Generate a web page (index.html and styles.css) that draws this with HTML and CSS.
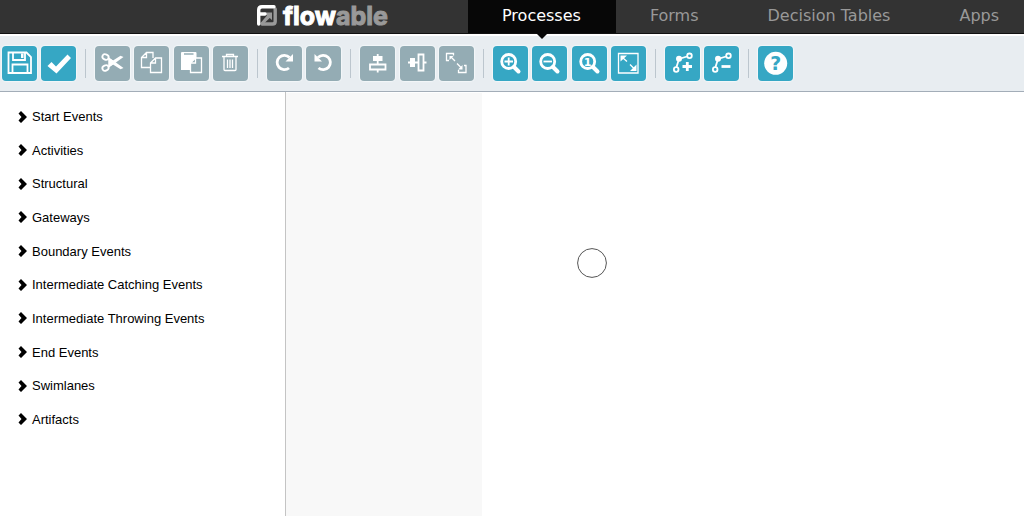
FILE: index.html
```html
<!DOCTYPE html>
<html lang="en">
<head>
<meta charset="utf-8">
<title>Flowable</title>
<link rel="stylesheet" href="styles.css">
</head>
<body>
<header class="header">
  <div class="brand">
    <a class="logo" href="#">
      <svg class="logo-mark" viewBox="0 0 20 21" aria-hidden="true">
        <path d="M18.200 4V16.500Q18.200 19 15.500 19H5" fill="none" stroke="#999" stroke-width="3.400" stroke-linecap="round" stroke-linejoin="round"/>
        <path d="M7.500 7.500H15V15L12.700 13L5.500 20L3.500 18L10 10.500Z" fill="#999"/>
        <path d="M1.700 19V5Q1.700 1.700 5 1.700H17M2 9H8" fill="none" stroke="#fff" stroke-width="3.400" stroke-linecap="round"/>
      </svg>
      <span class="logo-text">flow<span class="logo-dim">able</span></span>
    </a>
  </div>
  <nav class="nav">
    <a class="tab tab-active" href="#">Processes</a>
    <a class="tab" href="#">Forms</a>
    <a class="tab" href="#">Decision Tables</a>
    <a class="tab" href="#">Apps</a>
  </nav>
</header>

<div class="toolbar" role="toolbar" aria-label="Editor">
  <div class="group pair">
    <button class="tool" aria-label="Save"><svg viewBox="0 0 35 35"><path d="M6.500 6.500H24.500L29 11V27H6.500Z" class="line2"/><path d="M11 6.500V14H23V6.500M10.500 27V18.500H25.500V27" class="line2"/><path d="M19 7.500H21.500V12H19Z" class="solid"/></svg></button>
    <button class="tool" aria-label="Validate"><svg viewBox="0 0 35 35"><path d="M6.500 20L10.500 16L15 20.500L26.500 8.500L30 12L15.500 27.500Z" class="solid"/></svg></button>
  </div>
  <span class="rule"></span>
  <div class="group quad">
    <button class="tool" aria-label="Cut" disabled><svg viewBox="0 0 35 35"><ellipse cx="10.500" cy="11" rx="3.200" ry="2.600" transform="rotate(25 10.500 11)" class="line2"/><ellipse cx="10.500" cy="22" rx="3.200" ry="2.600" transform="rotate(-25 10.500 22)" class="line2"/><path d="M13 11.500L18 14.500L25.500 9.800L28.500 11L14 21.500Z" class="solid"/><path d="M13 21.500L18 18.500L25.500 23.200L28.500 22L14 11.500Z" class="solid"/></svg></button>
    <button class="tool" aria-label="Copy" disabled><svg viewBox="0 0 35 35"><path d="M16 21.500H7.500V11.500L12.500 6.500H19V12M12.500 6.500V11.500H7.500M16.500 17L21.500 12H27.500V26.500H16.500ZM21.500 12V17H16.500" class="line"/></svg></button>
    <button class="tool" aria-label="Paste" disabled><svg viewBox="0 0 35 35"><path d="M7 7Q7 6 8 6H21.500Q22.500 6 22.500 7V24H7Z" class="solid"/><path d="M10 8H19.500" class="gap"/><path d="M16.500 17L21.500 12H27.500V26.500H16.500Z" class="sheet"/><path d="M21.500 12V17H16.500" class="line"/></svg></button>
    <button class="tool" aria-label="Delete" disabled><svg viewBox="0 0 35 35"><path d="M9 10.500H25M13.500 10V8.500H20.500V10M11 11V23.500Q11 24.500 12 24.500H22Q23 24.500 23 23.500V11M14.500 13.500V22M17 13.500V22M19.500 13.500V22" class="line"/></svg></button>
  </div>
  <span class="rule"></span>
  <div class="group pair">
    <button class="tool" aria-label="Redo" disabled><svg viewBox="0 0 35 35"><path d="M22 22A7.200 7.200 0 1 1 22.500 11.500" class="line3"/><path d="M26 8V15.500H18.500Z" class="solid"/></svg></button>
    <button class="tool" aria-label="Undo" disabled><svg viewBox="0 0 35 35"><path d="M12.500 22A7.200 7.200 0 1 0 12 11.500" class="line3"/><path d="M8.500 8V15.500H16Z" class="solid"/></svg></button>
  </div>
  <span class="rule"></span>
  <div class="group trio">
    <button class="tool" aria-label="Align vertical" disabled><svg viewBox="0 0 35 35"><path d="M13 10H22.500V15H13Z" class="solid"/><path d="M17.700 8V18M17.700 24V26.500M10 18.500H25.500V23.500H10Z" class="line2"/></svg></button>
    <button class="tool" aria-label="Align horizontal" disabled><svg viewBox="0 0 35 35"><path d="M10 12H15V21H10Z" class="solid"/><path d="M8 16.500H18M24 16.500H26.500M18.500 8.500H23.500V24.500H18.500Z" class="line2"/></svg></button>
    <button class="tool" aria-label="Same size" disabled><svg viewBox="0 0 35 35"><path d="M10 14.500H7.500V7.500H14.500V9.500M25 19.500H27V26.500H19.500V24M12 11L16 15M18 17.500L22 21.500" class="line"/><path d="M10.500 10H14.500L10.500 14ZM23.500 23.500H19L23.500 19Z" class="solid"/></svg></button>
  </div>
  <span class="rule"></span>
  <div class="group quad">
    <button class="tool" aria-label="Zoom in"><svg viewBox="0 0 35 35"><circle cx="15.700" cy="15.500" r="7" class="line3"/><path d="M21 21L25.500 25.500" class="handle"/><path d="M11.500 15.500H20M15.700 11.500V19.500" class="line2"/></svg></button>
    <button class="tool" aria-label="Zoom out"><svg viewBox="0 0 35 35"><circle cx="15.700" cy="15.500" r="7" class="line3"/><path d="M21 21L25.500 25.500" class="handle"/><path d="M11.500 15.500H20" class="line2"/></svg></button>
    <button class="tool" aria-label="Zoom to actual size"><svg viewBox="0 0 35 35"><circle cx="15.700" cy="15.500" r="7" class="line3"/><path d="M21 21L25.500 25.500" class="handle"/><text x="15.500" y="19.500" class="digit">1</text></svg></button>
    <button class="tool" aria-label="Zoom to fit"><svg viewBox="0 0 35 35"><path d="M7.500 7.500H27V27H7.500ZM12 12L16 15.500M19 18.500L23 22.500" class="line"/><path d="M9.500 9.500H16L9.500 15.500ZM25.500 25H19L25.500 18.500Z" class="solid"/></svg></button>
  </div>
  <span class="rule"></span>
  <div class="group pair">
    <button class="tool" aria-label="Add bend-point"><svg viewBox="0 0 35 35"><path d="M11.500 21L14 13L22 10.500" class="line2"/><circle cx="14" cy="12.800" r="3" class="solid"/><circle cx="24.500" cy="9.800" r="2.300" class="line2"/><circle cx="11.200" cy="23.500" r="2.300" class="line2"/><path d="M17.500 20.500H27M22.300 16V25" class="line3"/></svg></button>
    <button class="tool" aria-label="Remove bend-point"><svg viewBox="0 0 35 35"><path d="M11.500 21L14 13L22 10.500" class="line2"/><circle cx="14" cy="12.800" r="3" class="solid"/><circle cx="24.500" cy="9.800" r="2.300" class="line2"/><circle cx="11.200" cy="23.500" r="2.300" class="line2"/><path d="M17.500 20.500H26.500" class="line3"/></svg></button>
  </div>
  <span class="rule"></span>
  <div class="group">
    <button class="tool" aria-label="Help"><svg viewBox="0 0 35 35"><circle cx="17.700" cy="17.300" r="11.500" class="solid"/><text x="17.700" y="24" class="question">?</text></svg></button>
  </div>
</div>

<main class="editor">
  <aside class="palette">
    <ul class="sections">
      <li><button class="section"><svg class="chevron" viewBox="0 0 9 12"><use href="#chev"/></svg>Start Events</button></li>
      <li><button class="section"><svg class="chevron" viewBox="0 0 9 12"><use href="#chev"/></svg>Activities</button></li>
      <li><button class="section"><svg class="chevron" viewBox="0 0 9 12"><use href="#chev"/></svg>Structural</button></li>
      <li><button class="section"><svg class="chevron" viewBox="0 0 9 12"><use href="#chev"/></svg>Gateways</button></li>
      <li><button class="section"><svg class="chevron" viewBox="0 0 9 12"><use href="#chev"/></svg>Boundary Events</button></li>
      <li><button class="section"><svg class="chevron" viewBox="0 0 9 12"><use href="#chev"/></svg>Intermediate Catching Events</button></li>
      <li><button class="section"><svg class="chevron" viewBox="0 0 9 12"><use href="#chev"/></svg>Intermediate Throwing Events</button></li>
      <li><button class="section"><svg class="chevron" viewBox="0 0 9 12"><use href="#chev"/></svg>End Events</button></li>
      <li><button class="section"><svg class="chevron" viewBox="0 0 9 12"><use href="#chev"/></svg>Swimlanes</button></li>
      <li><button class="section"><svg class="chevron" viewBox="0 0 9 12"><use href="#chev"/></svg>Artifacts</button></li>
    </ul>
  </aside>
  <div class="gutter"></div>
  <div class="canvas">
    <svg class="node" viewBox="0 0 30 30" role="img" aria-label="Start event"><circle cx="15" cy="15" r="14.400" fill="#fff" stroke="#555"/></svg>
  </div>
</main>

<svg class="defs" aria-hidden="true"><defs><path id="chev" d="M0.500 2.500L3 0L9 6L3 12L0.500 9.500L3.500 6Z"/></defs></svg>
</body>
</html>
```
FILE: styles.css
```css
* { box-sizing: border-box; }

body {
  margin: 0;
  min-height: 100vh;
  display: flex;
  flex-direction: column;
  background: #fff;
  color: #000;
  font-family: "Liberation Sans", Arial, sans-serif;
  font-size: 13px;
}

button {
  border: 0;
  padding: 0;
  background: none;
  color: inherit;
  font: inherit;
}

.header {
  display: flex;
  background: #333;
  border-bottom: 1px solid #111;
}

.brand {
  flex: 0 0 468px;
  padding-left: 257px;
}

.logo {
  display: flex;
  align-items: center;
  gap: 6px;
  height: 31px;
  color: #fff;
  text-decoration: none;
}

.logo-mark { width: 20px; height: 21px; }

.logo-text {
  font: 700 25px/30px Inter, sans-serif;
  -webkit-text-stroke: 1px currentColor;
}

.logo-dim { color: #999; }

.nav { display: flex; flex: 1; min-width: 0; }

.tab {
  position: relative;
  padding: 0 35px 2px 34px;
  color: #999;
  font: 16px/31px "DejaVu Sans", sans-serif;
  text-decoration: none;
  white-space: nowrap;
}

.tab:last-child { padding-right: 0; }

.tab-active { background: #070707; color: #fff; }

.tab-active::after {
  content: "";
  position: absolute;
  top: 100%;
  left: 50%;
  margin-left: -6px;
  border: 6px solid transparent;
  border-top-color: #070707;
  border-bottom: 0;
}

.toolbar {
  display: flex;
  align-items: center;
  padding: 10px 2px;
  background: #e8edf1;
  border-top: 2px solid #fff;
  border-bottom: 1px solid #a3adb8;
}

.group { display: flex; justify-content: space-between; }
.pair { width: 74px; }
.trio { width: 114px; }
.quad { width: 153px; }

.rule {
  width: 1px;
  height: 29px;
  margin: 0 9px;
  background: #bcc6ce;
}

.tool {
  width: 35px;
  height: 35px;
  border-radius: 4px;
  background: #36a7c4;
  box-shadow: 0 0 1px 1px #f3f7f9;
  color: #36a7c4;
}

.tool:disabled { background: #94acb4; color: #94acb4; }

.tool svg { display: block; }

.solid { fill: #fff; }
.line, .line2, .line3, .handle { fill: none; stroke: #fff; stroke-width: 1.3; }
.line2 { stroke-width: 1.800; }
.line3 { stroke-width: 2.800; }
.handle { stroke-width: 4; stroke-linecap: round; }
.gap { stroke: currentColor; stroke-width: 1.500; }
.sheet { fill: currentColor; stroke: #fff; stroke-width: 1.300; }

.digit, .question {
  fill: #fff;
  font: bold 11px "DejaVu Sans", sans-serif;
  text-anchor: middle;
}

.question { fill: currentColor; font-size: 19px; }

.editor { display: flex; flex: 1; }

.palette {
  flex: 0 0 286px;
  padding: 16px 18px;
  border-right: 1px solid #c4c4c4;
}

.sections {
  display: grid;
  align-content: space-between;
  min-height: 320px;
  margin: 0;
  padding: 0;
  list-style: none;
}

.section {
  display: flex;
  align-items: center;
  gap: 5px;
  line-height: 17px;
}

.chevron { width: 9px; height: 12px; }

.gutter { flex: 0 0 196px; margin-top: 1px; background: #f8f8f8; }

.canvas { position: relative; flex: 1; }

.node {
  position: absolute;
  top: 156px;
  left: 95px;
  width: 30px;
  height: 30px;
}

.defs { position: absolute; width: 0; height: 0; }
```
